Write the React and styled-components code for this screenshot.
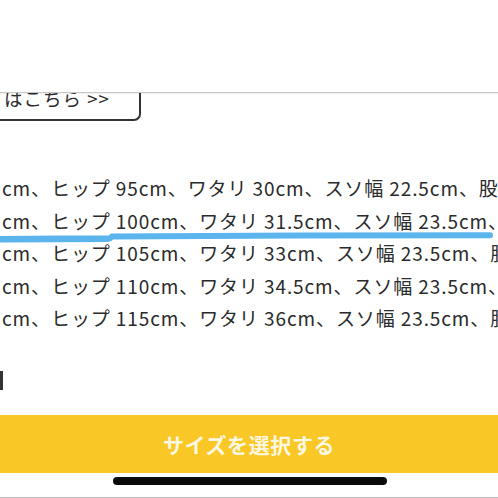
import React from "react";
import styled, { createGlobalStyle } from "styled-components";

const GlobalStyle = createGlobalStyle`
    html, body {
        margin: 0;
        padding: 0;
        background: #FFFFFF;
    }

    body {
        font-family: "Noto Sans CJK JP", "Noto Sans", sans-serif;
        color: #2B2B2B;
    }
`;

const rows = [
    "cm、ヒップ 95cm、ワタリ 30cm、スソ幅 22.5cm、股下",
    "cm、ヒップ 100cm、ワタリ 31.5cm、スソ幅 23.5cm、股下",
    "cm、ヒップ 105cm、ワタリ 33cm、スソ幅 23.5cm、股下",
    "cm、ヒップ 110cm、ワタリ 34.5cm、スソ幅 23.5cm、股下",
    "cm、ヒップ 115cm、ワタリ 36cm、スソ幅 23.5cm、股下",
];

export default function App() {
    return (
        <>
            <GlobalStyle />
            <Screen>
                <Header />

                <Content>
                    <LinkBox>はこちら &gt;&gt;</LinkBox>

                    <SizeList>
                        {rows.map((txt, i) => (
                            <SizeRow key={i}>{txt}</SizeRow>
                        ))}

                        <Marker viewBox="0 0 498 14" preserveAspectRatio="none">
                            <path d="M0 9 L60 8.6 L110 8.2 L112 6.5 L300 5.6 L490 5.2" stroke="#5BB5EC" strokeWidth="6" strokeLinecap="round" fill="none" />
                            <path d="M0 10 L108 9.6" stroke="#5BB5EC" strokeWidth="5" strokeLinecap="round" fill="none" />
                        </Marker>
                    </SizeList>

                    <Cut />
                </Content>

                <SelectButton>サイズを選択する</SelectButton>

                <HomeArea>
                    <HomeIndicator />
                </HomeArea>
            </Screen>
        </>
    );
}

const Screen = styled.div`
    display: flex;
    flex-direction: column;
    width: 498px;
    height: 498px;
    overflow: hidden;
    background: #FFFFFF;
`;

const Header = styled.div`
    position: relative;
    z-index: 2;
    flex: 0 0 92px;
    background: #FFFFFF;
    border-bottom: 1px solid #C8C8C8;
    box-shadow: 0px 1px 1px rgba(0, 0, 0, 0.06);
`;

const Content = styled.div`
    display: flex;
    flex-direction: column;
    flex: 0 0 322px;
    overflow: hidden;
`;

const LinkBox = styled.div`
    width: 153px;
    height: 33px;
    margin: -5px 0px 0px -12px;
    padding: 0px 0px 0px 14px;
    box-sizing: border-box;
    border: 2px solid #333333;
    border-top: none;
    border-bottom-right-radius: 7px;
    font-size: 18.5px;
    line-height: 20px;
    letter-spacing: 1px;
    color: #2B2B2B;
    white-space: nowrap;
`;

const SizeList = styled.div`
    position: relative;
    margin: 51px 0px 0px 0px;
`;

const SizeRow = styled.div`
    height: 32.5px;
    font-size: 19px;
    line-height: 32.5px;
    letter-spacing: 0.9px;
    white-space: nowrap;
    overflow: hidden;
    padding-left: 2px;
`;

const Marker = styled.svg`
    position: absolute;
    left: 0px;
    top: 58px;
    width: 498px;
    height: 14px;
`;

const Cut = styled.div`
    width: 3px;
    height: 19px;
    margin: 36px 0px 0px 0px;
    background: #333333;
`;

const SelectButton = styled.div`
    display: flex;
    justify-content: center;
    align-items: center;
    flex: 0 0 58px;
    background: #F9C826;
    color: rgba(255, 255, 255, 0.88);
    font-size: 21px;
    font-weight: 700;
    letter-spacing: 0.6px;
`;

const HomeArea = styled.div`
    display: flex;
    justify-content: center;
    flex: 0 0 26px;
    padding-top: 4px;
    box-sizing: border-box;
    border-bottom: 2px solid #BDBDBD;
`;

const HomeIndicator = styled.div`
    width: 274px;
    height: 8px;
    margin-left: 1px;
    border-radius: 4px;
    background: #0A0A0A;
`;
